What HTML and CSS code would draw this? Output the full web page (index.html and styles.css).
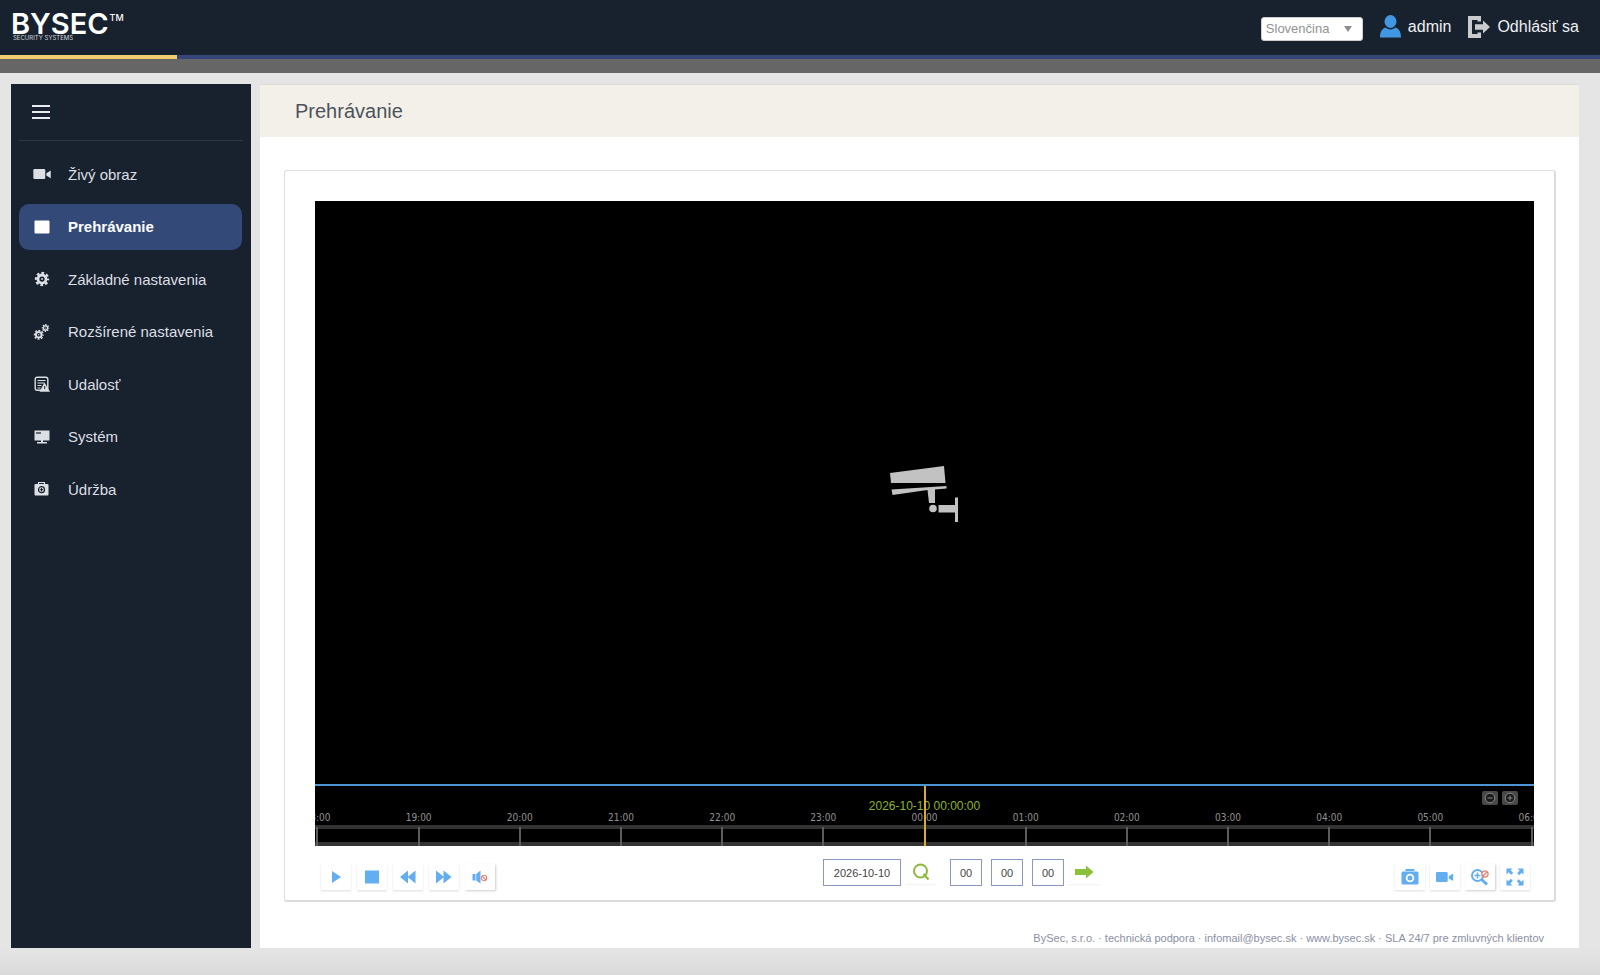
FILE: index.html
```html
<!DOCTYPE html>
<html lang="sk">
<head>
<meta charset="utf-8">
<title>BYSEC – Prehrávanie</title>
<link rel="stylesheet" href="styles.css">
</head>
<body>
<svg class="sprite" aria-hidden="true">
  <symbol id="gear" viewBox="0 0 16 16">
    <circle cx="8" cy="8" r="4.300" fill="none" stroke="currentColor" stroke-width="3"/>
    <circle cx="8" cy="8" r="6.600" fill="none" stroke="currentColor" stroke-width="2.400" stroke-dasharray="2.900 2.284" stroke-dashoffset="1.450"/>
    <circle cx="8" cy="8" r="1" fill="currentColor"/>
  </symbol>
  <symbol id="banned" viewBox="0 0 8 8">
    <circle cx="4" cy="4" r="3.100" fill="#fff" stroke="#e8806f" stroke-width="1.300"/>
    <path d="M2 2l4 4" stroke="#e8806f" stroke-width="1.300"/>
  </symbol>
  <symbol id="camcorder" viewBox="0 0 20 12">
    <rect x="0" y="0" width="13" height="11" rx="1.400" fill="currentColor"/>
    <path d="M14.200 4.600L19 1.600v8.400l-4.800-3z" fill="currentColor"/>
  </symbol>
</svg>

<header class="topbar">
  <a class="logo" href="#">
    <span class="logo-name">BYSEC<sup class="logo-tm">TM</sup></span>
    <span class="logo-sub">SECURITY SYSTEMS</span>
  </a>
  <div class="account">
    <div class="lang">
      <select class="lang-select" aria-label="Jazyk"><option>Slovenčina</option></select>
      <svg class="lang-arrow" width="8" height="6" viewBox="0 0 8 6"><path d="M0 0h8L4 6z" fill="#8d8d8d"/></svg>
    </div>
    <a class="account-link" href="#">
      <svg width="21" height="23" viewBox="0 0 21 23" fill="#4197e2"><ellipse cx="10.500" cy="6.500" rx="6" ry="6.500"/><path d="M0 22.500C0 17 2 13.500 5.500 12.500c3 2.600 7 2.600 10 0 3.500 1 5.500 4.500 5.500 10z"/></svg>
      admin
    </a>
    <a class="account-link" href="#">
      <svg width="22" height="22" viewBox="0 0 22 22" fill="#c9cbcd"><path d="M0 0h13v5.500H9.500V4H4v14h5.500v-1.500H13V22H0z"/><path d="M7 8.300h8V4.500l7 6.500-7 6.500v-3.800H7z"/></svg>
      Odhlásiť sa
    </a>
  </div>
</header>
<div class="accent"><div class="accent-progress"></div></div>

<div class="layout">
  <aside class="sidebar">
    <div class="sidebar-head">
      <button class="burger" type="button" aria-label="Ponuka"><i></i><i></i><i></i></button>
    </div>
    <nav class="menu">
      <a class="menu-item" href="#"><svg class="menu-icon" viewBox="0 0 20 16"><use href="#camcorder" x="1" y="3" width="19" height="11"/></svg>Živý obraz</a>
      <a class="menu-item active" href="#"><svg class="menu-icon" viewBox="0 0 20 16"><rect x="2.500" y="1.500" width="15" height="13" rx="1" fill="#fff"/></svg>Prehrávanie</a>
      <a class="menu-item" href="#"><svg class="menu-icon" viewBox="0 0 20 16"><use href="#gear" x="2.500" y="0.500" width="15" height="15"/></svg>Základné nastavenia</a>
      <a class="menu-item" href="#"><svg class="menu-icon" viewBox="0 0 20 16"><use href="#gear" x="1.500" y="5.500" width="10.500" height="10.500"/><use href="#gear" x="9.500" y="0" width="8" height="8"/></svg>Rozšírené nastavenia</a>
      <a class="menu-item" href="#"><svg class="menu-icon" viewBox="0 0 20 16"><rect x="3.200" y="1.200" width="12.600" height="13" rx="2" fill="none" stroke="currentColor" stroke-width="1.400"/><path d="M5.500 4.500h8M5.500 7h7M5.500 9.500h4M5.500 12h3" stroke="currentColor" stroke-width="1.200"/><path d="M12.500 6.500l5.500 9.300H7.500z" fill="currentColor"/><path d="M12.700 10v3" stroke="#18212e" stroke-width="1"/></svg>Udalosť</a>
      <a class="menu-item" href="#"><svg class="menu-icon" viewBox="0 0 20 16"><path d="M2.500 1.500h15v10h-15z" fill="currentColor"/><path d="M4 4h5" stroke="#18212e" stroke-width="1.200"/><path d="M9 11h2v2h4v1.600H5V13h4z" fill="currentColor"/></svg>Systém</a>
      <a class="menu-item" href="#"><svg class="menu-icon" viewBox="0 0 20 16"><rect x="2.500" y="3" width="14" height="11.500" rx="1" fill="currentColor"/><path d="M6.500 3V1.500h6V3" fill="none" stroke="currentColor" stroke-width="1.200"/><circle cx="9.500" cy="8.700" r="3" fill="none" stroke="#18212e" stroke-width="1.200"/><path d="M9.500 7v3.400M7.800 8.700h3.400" stroke="#18212e" stroke-width="1"/></svg>Údržba</a>
    </nav>
  </aside>

  <main class="main">
    <h1 class="title">Prehrávanie</h1>
    <section class="card">
      <div class="screen">
        <svg width="70" height="57" viewBox="0 0 70 57" fill="#c2c2c2"><path d="M0 7L54 0l1.500 17H1z"/><path d="M1.500 23.500L56.500 20v2.500l-11.500 1V37h-6l-1.500-13L2.500 29z"/><circle cx="43" cy="42.500" r="3.800"/><path d="M48.500 39H65v-7.500h3V56h-3v-9.500H48.500z"/></svg>
      </div>
      <div class="timeline">
        <div class="hours">
          <div class="hour">18:00</div><div class="hour">19:00</div><div class="hour">20:00</div><div class="hour">21:00</div><div class="hour">22:00</div><div class="hour">23:00</div><div class="hour">00:00</div><div class="hour">01:00</div><div class="hour">02:00</div><div class="hour">03:00</div><div class="hour">04:00</div><div class="hour">05:00</div><div class="hour">06:00</div>
        </div>
        <div class="cursor-time">2026-10-10 00:00:00</div>
        <div class="cursor"></div>
        <div class="scale">
          <button class="scale-btn" type="button" aria-label="Oddialiť"><svg width="16" height="14" viewBox="0 0 16 14"><circle cx="8" cy="7" r="4.800"/><path d="M5.500 7h5"/></svg></button>
          <button class="scale-btn" type="button" aria-label="Priblížiť"><svg width="16" height="14" viewBox="0 0 16 14"><circle cx="8" cy="7" r="4.800"/><path d="M5.500 7h5M8 4.500v5"/></svg></button>
        </div>
      </div>
      <div class="controls">
        <div class="group group-left">
          <button class="tool" type="button" aria-label="Prehrať"><svg width="18" height="14" viewBox="0 0 18 14"><path d="M5 1l9 6-9 6z"/></svg></button>
          <button class="tool" type="button" aria-label="Zastaviť"><svg width="18" height="14" viewBox="0 0 18 14"><path d="M2 0.500h14v13H2z"/></svg></button>
          <button class="tool" type="button" aria-label="Spomaliť"><svg width="18" height="14" viewBox="0 0 18 14"><path d="M9 0.500v13L1 7zM16.500 0.500v13L8.500 7z"/></svg></button>
          <button class="tool" type="button" aria-label="Zrýchliť"><svg width="18" height="14" viewBox="0 0 18 14"><path d="M1 0.500v13L9 7zM8.500 0.500v13L16.500 7z"/></svg></button>
          <button class="tool tool-off" type="button" aria-label="Zvuk"><svg width="18" height="14" viewBox="0 0 18 14"><path d="M1.500 4h3v6.500h-3zM5.200 4L9.500 0.500v13L5.200 10.500z"/><use href="#banned" x="9.500" y="4.500" width="7" height="7"/></svg></button>
        </div>
        <div class="group group-center">
          <input class="field field-date" type="text" value="2026-10-10" aria-label="Dátum">
          <button class="tool tool-flat" type="button" aria-label="Hľadať"><svg width="18" height="18" viewBox="0 0 18 18" fill="none" stroke="#8cba3c" stroke-width="2"><circle cx="8.500" cy="8" r="6.500"/><path d="M11.500 11l5 5.500" stroke-width="2.200"/></svg></button>
          <div class="clock">
            <input class="field field-time" type="text" value="00" aria-label="Hodiny">
            <input class="field field-time" type="text" value="00" aria-label="Minúty">
            <input class="field field-time" type="text" value="00" aria-label="Sekundy">
          </div>
          <button class="tool tool-flat" type="button" aria-label="Prejsť"><svg width="20" height="14" viewBox="0 0 20 14"><path d="M1 4h11V0.500L19.500 7 12 13.500V10H1z" fill="#8cc03a"/></svg></button>
        </div>
        <div class="group group-right">
          <button class="tool" type="button" aria-label="Snímka"><svg width="18" height="16" viewBox="0 0 18 16"><path d="M4.500 0h9v2h-9zM2 2.500h14q1.500 0 1.500 1.500v10q0 1.500-1.500 1.500H2q-1.500 0-1.500-1.500V4Q.500 2.500 2 2.500z"/><circle cx="9" cy="9" r="3.400" fill="none" stroke="#fff" stroke-width="1.800"/></svg></button>
          <button class="tool" type="button" aria-label="Záznam"><svg width="18" height="12" viewBox="0 0 18 12"><use href="#camcorder" x="0" y="1" width="18" height="11"/></svg></button>
          <button class="tool tool-off" type="button" aria-label="Digitálny zoom"><svg width="20" height="18" viewBox="0 0 20 18"><circle cx="7.500" cy="7.500" r="5.500" fill="none" stroke="#62aef0" stroke-width="2"/><path d="M11 11l6 5.500" stroke="#62aef0" stroke-width="3"/><path d="M4.500 7.500h6M7.500 4.500v6" stroke="#62aef0" stroke-width="1.600"/><use href="#banned" x="11" y="2" width="8" height="8" transform="matrix(-1 0 0 1 30 0)"/></svg></button>
          <button class="tool" type="button" aria-label="Celá obrazovka"><svg width="18" height="18" viewBox="0 0 18 18"><path id="corner" d="M.500.500h6L4.700 2.300 7.200 4.800 5.200 6.800 2.600 4.300.500 6.500z"/><use href="#corner" transform="rotate(90 9 9)"/><use href="#corner" transform="rotate(180 9 9)"/><use href="#corner" transform="rotate(270 9 9)"/></svg></button>
        </div>
      </div>
    </section>
    <footer class="footer">BySec, s.r.o. · technická podpora · infomail@bysec.sk · www.bysec.sk · SLA 24/7 pre zmluvných klientov</footer>
  </main>
</div>
</body>
</html>
```
FILE: styles.css
```css
* { box-sizing: border-box; }

body {
  display: flex;
  flex-direction: column;
  min-height: 100vh;
  margin: 0;
  background: #e5e5e5;
  font-family: "Liberation Sans", Arial, sans-serif;
}

a { color: inherit; text-decoration: none; }
button, select, input { font: inherit; margin: 0; padding: 0; }
svg { display: block; flex: none; }
.sprite { position: absolute; width: 0; height: 0; }

/* top bar */
.topbar {
  display: flex;
  justify-content: space-between;
  align-items: flex-start;
  height: 55px;
  padding: 12px 21px 0 11px;
  background: #18212e;
  color: #eef0f3;
}
.logo { display: flex; flex-direction: column; font-family: Inter, sans-serif; color: #fff; }
.logo-name { display: flex; gap: 1px; font-size: 29px; line-height: 23px; font-weight: 600; }
.logo-tm { font-size: 9px; line-height: 12px; font-weight: 500; }
.logo-sub { padding-left: 2px; font-size: 6px; line-height: 6px; color: #d4d8de; }

.account { display: flex; align-items: center; gap: 17px; font-size: 16px; }
.account-link { display: flex; align-items: center; gap: 7px; height: 29px; }
.lang { position: relative; margin-top: 5px; }
.lang-select {
  display: block;
  width: 102px;
  height: 24px;
  padding: 0 4px 2px;
  border: 1px solid #cfcfcf;
  border-radius: 3px;
  appearance: none;
  background: #fff;
  color: #929292;
  font-size: 13px;
}
.lang-arrow { position: absolute; top: 9px; right: 11px; pointer-events: none; }

.accent { height: 18px; border-bottom: 14px solid #666; background: #364478; }
.accent-progress { width: 177px; height: 4px; background: #efcd6c; }

/* page columns */
.layout {
  display: flex;
  flex: 1;
  gap: 9px;
  padding: 11px 21px 27px 11px;
  background: linear-gradient(to top, #dadada, #e5e5e5 27px);
}
.sidebar { flex: none; width: 240px; padding: 0 8px; background: #18212e; color: #dcdfe3; }
.sidebar-head { height: 57px; padding: 18px 13px; border-bottom: 1px solid #2d3843; }
.burger {
  display: flex;
  flex-direction: column;
  justify-content: space-between;
  width: 18px;
  height: 20px;
  padding: 3px 0 0;
  border: 0;
  background: none;
}
.burger i { width: 18px; height: 2px; margin-bottom: 3px; background: #e7ebee; }
.menu {
  display: flex;
  flex-direction: column;
  justify-content: space-between;
  height: 361px;
  margin-top: 10px;
  padding-right: 1px;
}
.menu-item {
  display: flex;
  align-items: center;
  gap: 16px;
  height: 46px;
  padding-left: 13px;
  border-radius: 10px;
  font-size: 15px;
}
.menu-item.active { background: #334a79; color: #fff; font-weight: 700; }
.menu-icon { width: 20px; height: 16px; }

/* main panel */
.main {
  display: flex;
  flex: 1;
  flex-direction: column;
  min-width: 0;
  background: #fff;
}
.title {
  height: 53px;
  margin: 0;
  padding-left: 35px;
  border-top: 1px solid #dcdcd6;
  background: #f2f0e9;
  color: #4d535b;
  font-size: 20px;
  line-height: 52px;
  font-weight: 400;
}
.card {
  display: flex;
  flex: 1;
  flex-direction: column;
  margin: 33px 23px 28px 24px;
  padding: 30px 20px 0 30px;
  border: 1px solid #dfe0dc;
  border-right: 2px solid #dcdcdc;
  border-bottom: 2px solid #dcdcdc;
  border-radius: 3px;
}
.screen {
  display: flex;
  flex: 1;
  align-items: center;
  justify-content: center;
  min-height: 200px;
  padding-top: 4px;
  background: #000;
}

.timeline { position: relative; border-top: 2px solid #4c94d4; background: #000; }
.hours {
  display: flex;
  justify-content: center;
  height: 60px;
  padding-top: 39px;
  overflow: hidden;
  background:
    linear-gradient(#333, #333) 0 39px / 100% 4px no-repeat,
    linear-gradient(#333, #333) 0 100% / 100% 4px no-repeat;
}
.hour {
  flex: 0 0 8.3%;
  height: 35px;
  margin-top: -14px;
  background: linear-gradient(#5c5c5c, #5c5c5c) center bottom / 2px 19px no-repeat;
  color: #919191;
  font-family: "DejaVu Sans Condensed", "DejaVu Sans", sans-serif;
  font-size: 10px;
  line-height: 14px;
  text-align: center;
}
.cursor { position: absolute; top: 0; left: 50%; width: 2px; height: 100%; margin-left: -1px; background: #dcab33; }
.cursor-time {
  position: absolute;
  top: 12px;
  left: 0;
  width: 100%;
  color: #8ab52c;
  font-size: 12px;
  line-height: 16px;
  text-align: center;
}
.scale { position: absolute; top: 5px; right: 16px; display: flex; gap: 4px; }
.scale-btn { width: 16px; height: 14px; border: 0; border-radius: 2px; background: #484848; }
.scale-btn svg { fill: #1b1b1b; stroke: #8b8b8b; stroke-width: 1; }

/* playback controls */
.controls {
  display: grid;
  grid-template-columns: 1fr auto 1fr;
  align-items: start;
  height: 54px;
  padding: 13px 4px 0 6px;
}
.group { display: flex; }
.group-left { gap: 6px; padding-top: 5px; }
.group-right { gap: 5px; padding-top: 5px; justify-content: flex-end; }
.group-center { gap: 5px; padding-left: 71px; }
.tool {
  display: flex;
  align-items: center;
  justify-content: center;
  width: 30px;
  height: 26px;
  border: 0;
  background: #fff;
  box-shadow: 0 1px 2px #ddd;
  fill: #62aef0;
  color: #62aef0;
}
.tool-off { box-shadow: 1px 1px 2px #ccc; }
.tool-flat { height: 25px; box-shadow: 0 1px 1px #f2f2f2; }
.clock { display: flex; gap: 9px; margin-left: 9px; }
.field {
  height: 27px;
  border: 1px solid #8b98c4;
  background: #fff;
  color: #444;
  font-size: 11px;
  text-align: center;
}
.field-date { width: 78px; }
.field-time { width: 32px; }

.footer { padding: 1px 35px 3px 0; color: #8b90a3; font-size: 11px; line-height: 14px; text-align: right; }
```
